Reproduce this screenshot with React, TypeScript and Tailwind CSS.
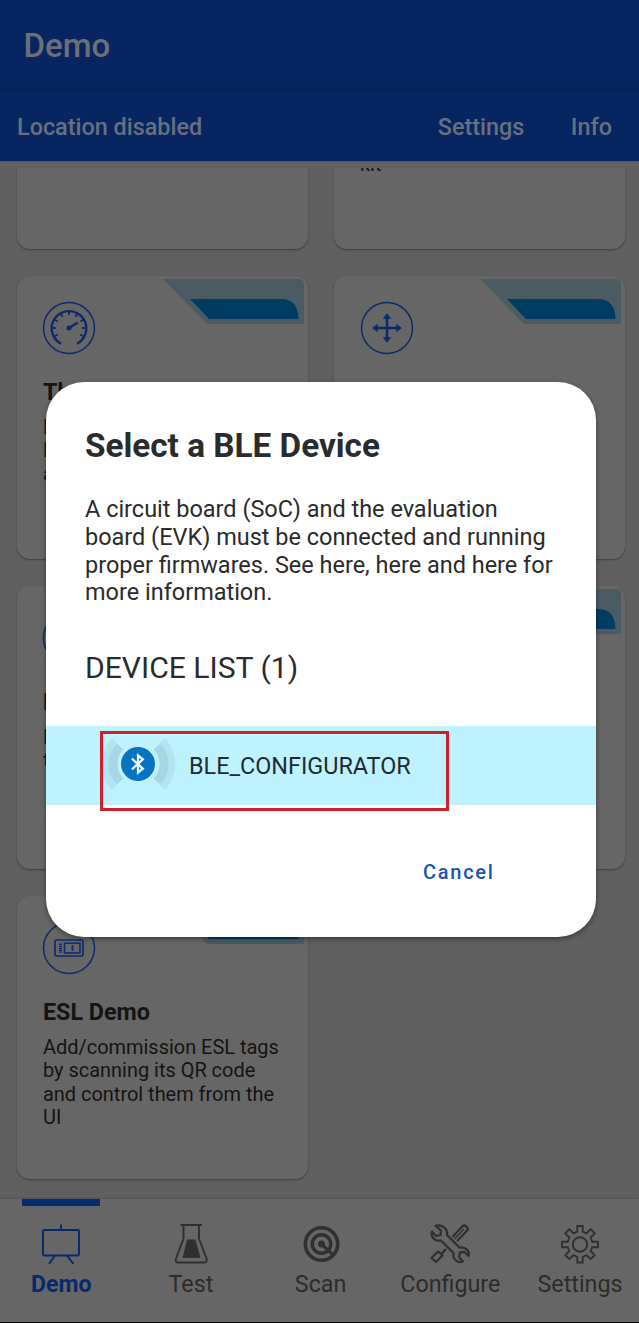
import React from "react";

function Ribbon() {
  return (
    <svg className="absolute right-[3px] top-[3px]" width="142" height="46" viewBox="0 0 142 46">
      <path d="M0 0H136Q141 0 141 6V45H44Z" fill="#4a5b64" />
      <path d="M27 20H118Q135 20 135.500 40H46Z" fill="#003c61" />
    </svg>
  );
}

function Ring({ children }: { children?: React.ReactNode }) {
  return (
    <svg className="block h-[54px] w-[54px]" viewBox="0 0 54 54" fill="none" stroke="#0a2a6e">
      <circle cx="27" cy="27" r="25.500" strokeWidth="1.500" />
      {children}
    </svg>
  );
}

function GaugeIcon() {
  const ticks = [-120, -90, -60, -30, 0, 30, 60, 90, 120];
  return (
    <Ring>
      <path d="M18.200 42.300A17.300 17.300 0 1 1 35.800 42.300" strokeWidth="2.300" strokeLinecap="round" />
      {ticks.map((a) => (
        <path key={a} d="M27 10.500V14" strokeWidth="1.800" transform={`rotate(${a} 27 27)`} />
      ))}
      <path d="M27 27L35 22" strokeWidth="2.300" strokeLinecap="round" />
      <circle cx="27" cy="27" r="2.500" fill="#0a2a6e" stroke="none" />
    </Ring>
  );
}

function MoveIcon() {
  return (
    <Ring>
      <path d="M27 17V37M17 27H37" strokeWidth="2.500" />
      <path
        d="M27 12.200L31.300 17.700H22.700ZM27 41.800L31.300 36.300H22.700ZM12.200 27L17.700 22.700V31.300ZM41.800 27L36.300 22.700V31.300Z"
        fill="#0a2a6e"
        stroke="none"
      />
    </Ring>
  );
}

function TagIcon() {
  return (
    <Ring>
      <rect x="13" y="19" width="28" height="16" rx="1.500" strokeWidth="1.700" />
      <rect x="22.500" y="22.200" width="15.500" height="9.700" strokeWidth="1.500" />
      <path d="M18.500 22.500V32" strokeWidth="2.800" strokeDasharray="1.500 0.700" />
      <path d="M32 25.500C30 24.600 28.600 26.300 30.400 27C32.400 27.700 31.300 29.600 28.900 28.700M30.400 24.300V30" strokeWidth="0.900" />
    </Ring>
  );
}

type CardProps = { icon?: React.ReactNode; title?: string; lines: string[]; ribbon?: boolean };

function Card({ icon, title, lines, ribbon = true }: CardProps) {
  return (
    <article className="relative h-[283px] w-[291px] shrink-0 rounded-[13px] bg-[#666666] pl-[26px] pt-[25px] shadow-[0_1px_2px_rgba(0,0,0,0.35)]">
      {ribbon && <Ribbon />}
      <div className="h-[54px]">{icon}</div>
      <h2 className="mt-[22px] h-[30px] whitespace-nowrap text-[23.300px] font-bold leading-[30px] text-[#141414]">{title}</h2>
      <div className="mt-[9px] text-[19.950px] leading-[23.400px] text-[#141414]">
        {lines.map((l, i) => (
          <p key={i} className="h-[23.400px] whitespace-nowrap">{l}</p>
        ))}
      </div>
    </article>
  );
}

function DemoIcon() {
  return (
    <svg width="42" height="42" viewBox="0 0 42 42" fill="none" stroke="#07296c" strokeWidth="1.900">
      <rect x="3" y="7" width="36" height="25.500" rx="1.500" />
      <path d="M21 1.500V7M15 32.500L9 41M27 32.500L33.500 41" />
    </svg>
  );
}

function FlaskIcon() {
  return (
    <svg width="42" height="42" viewBox="0 0 42 42" fill="none" stroke="#303030" strokeWidth="1.900">
      <path d="M10.500 2H32M13.500 2.500V15.500L6 35.500C5 38 6 39.500 8.300 39.500H34C36.400 39.500 37.500 38 36.500 35.500L29 15.500V2.500" />
      <path d="M17 16.500H25.500L30.500 35H12.500Z" fill="#303030" stroke="none" />
    </svg>
  );
}

function ScanIcon() {
  return (
    <svg width="42" height="42" viewBox="0 0 42 42" fill="none" stroke="#303030">
      <circle cx="21.500" cy="21" r="16.200" strokeWidth="3.600" />
      <circle cx="21.500" cy="21" r="9.300" strokeWidth="3.500" />
      <circle cx="21.500" cy="21" r="3.500" fill="#303030" stroke="none" />
      <path d="M21.500 21L33 32" strokeWidth="3.200" />
    </svg>
  );
}

function ToolsIcon() {
  return (
    <svg width="42" height="42" viewBox="0 0 42 42" fill="none" stroke="#303030" strokeWidth="2.300" strokeLinejoin="round">
      <path d="M6.500 2.800L12 7.500L11.500 12L7 13L3 8.500C1.500 14 5.500 18.500 12 17.500L24.500 30C23.500 36.500 28.500 40.500 34 38.500L30 34L31 29.500L35.500 29L39.500 33C41 28 37 24 30.500 24.500L18 12C19 6 13 0.800 6.500 2.800Z" />
      <path d="M23.500 14L33.500 3.300C35.500 1.300 39.700 4.200 38.500 7.200L28 18" />
      <path d="M25.500 16L35 6" strokeWidth="1.200" />
      <path d="M17 26L12 31.500" strokeWidth="2.500" />
      <path d="M9 28.500L13.500 32.500L7 39L2.500 35Z" />
    </svg>
  );
}

function GearIcon() {
  return (
    <svg width="42" height="42" viewBox="0 0 42 42" fill="none" stroke="#303030" strokeWidth="1.900">
      <path d="M18.300 3H23.700V8.700L27.500 10.300L31.700 6.300L35.700 10.300L31.700 14.500L33.300 18.800H39V24.200H33.300L31.700 28L35.700 32.200L31.700 36L27.500 32.200L23.700 34V39.500H18.300V34L14.500 32.200L10.300 36L6.300 32.200L10.300 28L8.700 24.200H3V18.800H8.700L10.300 14.500L6.300 10.300L10.300 6.300L14.500 10.300L18.300 8.700Z" />
      <circle cx="21" cy="21.500" r="7.200" />
    </svg>
  );
}

function BluetoothBadge() {
  return (
    <svg width="72" height="58" viewBox="0 0 72 58" fill="none">
      <path d="M11.500 5.500A35 35 0 0 0 11.500 52.500M59.500 5.500A35 35 0 0 1 59.500 52.500" stroke="#b0e5f1" strokeWidth="7" />
      <path d="M17 11.500A25.500 25.500 0 0 0 17 46.500M54 11.500A25.500 25.500 0 0 1 54 46.500" stroke="#a5d7e4" strokeWidth="9" />
      <circle cx="35" cy="29" r="18" fill="#c5eff9" />
      <circle cx="35" cy="29" r="17" fill="#0674c2" />
      <path d="M28.800 23.500L39.800 33.700L35 37.500V20.500L39.800 24.300L28.800 34.500" stroke="#e8faff" strokeWidth="2.300" />
    </svg>
  );
}

const nav = [
  { label: "Demo", icon: <DemoIcon />, active: true },
  { label: "Test", icon: <FlaskIcon /> },
  { label: "Scan", icon: <ScanIcon /> },
  { label: "Configure", icon: <ToolsIcon /> },
  { label: "Settings", icon: <GearIcon /> },
];

export default function App() {
  return (
    <div className="relative flex h-[1323px] w-[639px] flex-col overflow-hidden bg-[#5f5f5f] font-['Roboto',sans-serif]">
      <header className="flex h-[91px] shrink-0 items-center border-b-2 border-[#06225a] bg-[#072661] pl-[23.500px] pt-[2px] text-[33px] font-medium text-[#6b7078]">
        Demo
      </header>
      <div className="flex h-[70px] shrink-0 items-center bg-[#072661] pl-[17px] pr-[27px] pt-[4px] text-[23.400px] font-medium text-[#66707f]">
        <span className="flex-1">Location disabled</span>
        <span className="mr-[46.500px]">Settings</span>
        <span>Info</span>
      </div>
      <div className="h-[7px] shrink-0 border-t border-[#4a5870] bg-[#626262]" />

      <main className="flex min-h-0 flex-1 flex-col justify-end gap-[27px] overflow-hidden pb-[20px] pl-[17px]">
        <div className="flex gap-[26px]">
          <Card ribbon={false} lines={[]} />
          <Card ribbon={false} lines={["", "", "kit"]} />
        </div>
        <div className="flex gap-[26px]">
          <Card icon={<div className="-ml-px"><GaugeIcon /></div>} title="The" lines={["Live", "BLE", "and"]} />
          <Card icon={<MoveIcon />} lines={[]} />
        </div>
        <div className="flex gap-[26px]">
          <Card icon={<div className="-ml-px"><Ring /></div>} title="BLE" lines={["Put", "to"]} />
          <Card lines={[]} />
        </div>
        <div className="flex">
          <Card
            icon={<div className="-ml-px"><TagIcon /></div>}
            title="ESL Demo"
            lines={["Add/commission ESL tags", "by scanning its QR code", "and control them from the", "UI"]}
          />
        </div>
      </main>

      <nav className="flex h-[124px] shrink-0 border-b border-black bg-[#666666] shadow-[0_-1px_2px_rgba(0,0,0,0.15)]">
        <div className="-ml-[3.600px] flex">
          {nav.map((n) => (
            <div key={n.label} className="flex w-[129.700px] shrink-0 flex-col items-center">
              <div className={n.active ? "h-[7px] w-[78px] bg-[#072b70]" : "h-[7px] w-[78px]"} />
              <div className="mt-[17px] h-[42px]">{n.icon}</div>
              <span
                className={
                  n.active
                    ? "mt-[5px] text-[23px] font-bold leading-[30px] text-[#07296c]"
                    : "mt-[4px] text-[23.300px] leading-[30px] text-[#2c2c2c]"
                }
              >
                {n.label}
              </span>
            </div>
          ))}
        </div>
      </nav>

      <div className="absolute inset-0 flex items-start pl-[46px] pt-[382px]">
        <section
          role="dialog"
          className="flex h-[555px] w-[550px] flex-col rounded-[38px] bg-white text-[#2a2b2c] shadow-[0_2px_5px_rgba(0,0,0,0.4)]"
        >
          <h1 className="mt-[45px] h-[38px] pl-[39px] text-[33.300px] font-bold leading-[38px]">Select a BLE Device</h1>
          <p className="mt-[31px] whitespace-nowrap pl-[39px] text-[23.480px] leading-[27.800px]">
            A circuit board (SoC) and the evaluation
            <br />
            board (EVK) must be connected and running
            <br />
            proper firmwares. See here, here and here for
            <br />
            more information.
          </p>
          <h2 className="mt-[43px] h-[36px] pl-[39px] text-[30.100px] leading-[36px]">DEVICE LIST (1)</h2>
          <div className="mt-[40px] h-[79px] shrink-0 bg-[#bff2ff] pl-[54px] pt-[5px]">
            <div className="flex h-[80px] w-[349px] items-start border-[3px] border-[#cf1f28]">
              <div className="-ml-[0.500px] mt-[1px]">
                <BluetoothBadge />
              </div>
              <span className="ml-[14.500px] mt-[17px] text-[23.400px] leading-[30px] text-[#1d2c30]">BLE_CONFIGURATOR</span>
            </div>
          </div>
          <div className="mt-[52px] flex justify-end pr-[101.500px]">
            <button className="text-[20px] font-medium leading-[30px] tracking-[1.700px] text-[#1a55b0]">Cancel</button>
          </div>
        </section>
      </div>
    </div>
  );
}
